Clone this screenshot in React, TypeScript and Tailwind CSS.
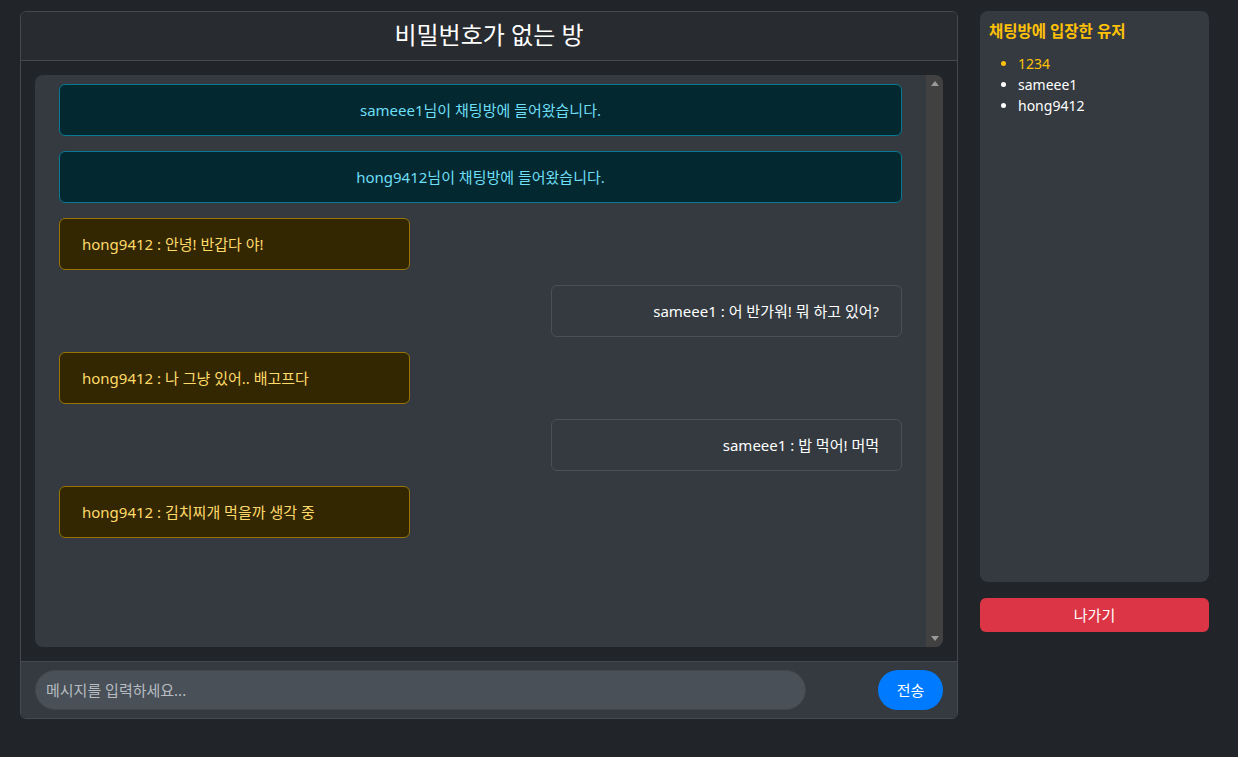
const messages = [
  { kind: "info", text: "sameee1님이 채팅방에 들어왔습니다." },
  { kind: "info", text: "hong9412님이 채팅방에 들어왔습니다." },
  { kind: "other", text: "hong9412 : 안녕! 반갑다 야!" },
  { kind: "mine", text: "sameee1 : 어 반가워! 뭐 하고 있어?" },
  { kind: "other", text: "hong9412 : 나 그냥 있어.. 배고프다" },
  { kind: "mine", text: "sameee1 : 밥 먹어! 머먹" },
  { kind: "other", text: "hong9412 : 김치찌개 먹을까 생각 중" },
];

const users = [
  { name: "1234", me: true },
  { name: "sameee1", me: false },
  { name: "hong9412", me: false },
];

function Message({ kind, text }: { kind: string; text: string }) {
  if (kind === "info") {
    return (
      <div className="flex h-[52px] items-center justify-center rounded-md border border-[#087990] bg-[#032830] text-[15px] text-[#6edff6]">
        {text}
      </div>
    );
  }
  if (kind === "other") {
    return (
      <div className="flex h-[52px] w-[351px] items-center rounded-md border border-[#997404] bg-[#332701] px-[22px] text-[15px] text-[#ffda6a]">
        {text}
      </div>
    );
  }
  return (
    <div className="ml-auto flex h-[52px] w-[351px] items-center justify-end rounded-md border border-[#4a5057] px-[22px] text-[15px] text-white">
      {text}
    </div>
  );
}

export default function App() {
  return (
    <main
      className="flex min-h-screen gap-[22px] bg-[#212529] pl-5 pt-[11px] text-white"
      style={{ fontFamily: '"Noto Sans", "Noto Sans CJK KR", sans-serif' }}
    >
      <section className="flex h-[708px] w-[938px] flex-col overflow-hidden rounded-md border border-[#45494d]">
        <header className="flex h-[49px] shrink-0 items-center justify-center border-b border-[#45494d] bg-[#282c31] pb-[3px] text-[24px]">
          비밀번호가 없는 방
        </header>

        <div className="flex-1 px-[14px] py-[14px]">
          <div className="flex h-full overflow-hidden rounded-lg bg-[#343a40]">
            <div className="flex flex-1 flex-col gap-[15px] pl-6 pr-6 pt-[9px]">
              {messages.map((m, i) => (
                <Message key={i} kind={m.kind} text={m.text} />
              ))}
            </div>
            <div className="flex w-[17px] flex-col items-center justify-between bg-[#414141] py-[6px]">
              <svg width="8" height="5" viewBox="0 0 8 5">
                <path d="M0 5 L4 0 L8 5 Z" fill="#9a9a9a" />
              </svg>
              <svg width="8" height="5" viewBox="0 0 8 5">
                <path d="M0 0 L4 5 L8 0 Z" fill="#9a9a9a" />
              </svg>
            </div>
          </div>
        </div>

        <footer className="flex h-[57px] shrink-0 items-center justify-between border-t border-[#45494d] bg-[#343a40] px-[14px]">
          <input
            placeholder="메시지를 입력하세요..."
            className="h-10 w-[771px] rounded-full border border-[#41474d] bg-[#495057] px-[10px] text-[15px] text-white outline-none placeholder:text-[#b6bcc2]"
          />
          <button className="h-10 w-[65px] rounded-full bg-[#007bff] text-[15px] text-white">전송</button>
        </footer>
      </section>

      <aside className="flex w-[229px] flex-col gap-4">
        <div className="h-[571px] rounded-lg bg-[#343a40] px-[9px] pt-[10px]">
          <h2 className="text-[15.5px] font-bold leading-[20px] text-[#ffc107]">채팅방에 입장한 유저</h2>
          <ul className="mt-[12px] list-disc pl-[29px] text-[14px] leading-[21px]">
            {users.map((u) => (
              <li key={u.name} className={u.me ? "text-[#ffc107]" : "text-white"}>
                {u.name}
              </li>
            ))}
          </ul>
        </div>
        <button className="h-[34px] rounded-md bg-[#dc3545] text-[15px] text-white">나가기</button>
      </aside>
    </main>
  );
}
